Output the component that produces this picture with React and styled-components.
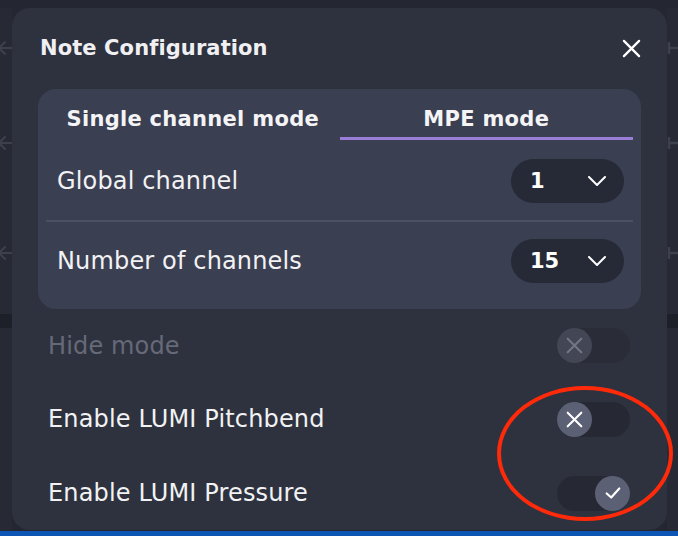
import { useState } from 'react';
import styled, { createGlobalStyle } from 'styled-components';

const GlobalStyle = createGlobalStyle`
  html, body {
    margin: 0;
    padding: 0;
    background: #242731;
    font-family: "DejaVu Sans", "Liberation Sans", sans-serif;
  }
`;

const Page = styled.div`
  position: relative;
  width: 678px;
  height: 536px;
  display: flex;
  flex-direction: column;
  overflow: hidden;
  background: #242731;
`;

const Stage = styled.div`
  flex: 1;
  display: flex;
  padding: 8px 0 1px;
  min-height: 0;
`;

const Side = styled.div`
  width: ${(p) => p.w}px;
  display: flex;
  flex-direction: column;
  align-items: ${(p) => (p.right ? 'flex-start' : 'flex-end')};
  overflow: hidden;
  background: #272a35;
  color: #3d414d;
`;

const SideItem = styled.div`
  height: 110px;
  display: flex;
  align-items: center;
  &:first-child {
    height: 80px;
  }
`;

const SideBand = styled.div`
  align-self: stretch;
  height: 14px;
  background: #1d2028;
  margin-top: 6px;
`;

const Taskbar = styled.div`
  height: 5px;
  background: #0d56b3;
`;

const Modal = styled.div`
  flex: 1;
  background: #2e323f;
  border-radius: 18px;
  padding: 0 26px;
  display: flex;
  flex-direction: column;
  color: #f2f2f4;
`;

const Header = styled.div`
  height: 81px;
  display: flex;
  align-items: flex-start;
  justify-content: space-between;
  padding-top: 28px;
  box-sizing: border-box;
`;

const Title = styled.h2`
  margin: 0;
  padding-left: 2px;
  font-size: 21px;
  font-weight: 700;
  line-height: 24px;
  letter-spacing: 0.1px;
  color: #f0f0f3;
`;

const CloseButton = styled.button`
  border: none;
  background: none;
  padding: 0;
  margin-top: 3px;
  width: 19px;
  height: 19px;
  color: #fff;
  cursor: pointer;
  display: flex;
`;

const Card = styled.div`
  background: #3b3f52;
  border-radius: 18px;
  padding: 0 8px 9px;
`;

const Tabs = styled.div`
  display: grid;
  grid-template-columns: 1fr 1fr;
`;

const Tab = styled.button`
  height: 51px;
  border: none;
  background: none;
  color: #f4f4f6;
  font-family: inherit;
  font-size: 21px;
  font-weight: 700;
  letter-spacing: 0.3px;
  padding: 13px 0 0;
  border-bottom: 3px solid ${(p) => (p.active ? '#9a7dd6' : 'transparent')};
  cursor: pointer;
`;

const Row = styled.div`
  height: 78px;
  display: flex;
  align-items: center;
  justify-content: space-between;
  padding: 0 9px 0 11px;
  border-bottom: ${(p) => (p.divider ? '2px solid #4c5065' : 'none')};
  margin-top: ${(p) => (p.divider ? 2 : 0)}px;
`;

const Label = styled.span`
  font-size: 24px;
  letter-spacing: 0.15px;
  color: ${(p) => (p.disabled ? '#666a78' : '#f2f2f4')};
`;

const Select = styled.div`
  width: 113px;
  height: 44px;
  box-sizing: border-box;
  border-radius: 22px;
  background: #262a36;
  display: flex;
  align-items: center;
  justify-content: space-between;
  padding: 0 18px 0 19px;
  font-size: 21px;
  font-weight: 700;
  color: #fff;
`;

const ToggleRow = styled.div`
  height: 74px;
  display: flex;
  align-items: center;
  justify-content: space-between;
  padding: 0 11px 0 10px;
`;

const Track = styled.div`
  width: 73px;
  height: 35px;
  border-radius: 18px;
  background: ${(p) => (p.disabled ? '#2a2d38' : '#262934')};
  display: flex;
  justify-content: ${(p) => (p.on ? 'flex-end' : 'flex-start')};
  cursor: ${(p) => (p.disabled ? 'default' : 'pointer')};
`;

const Knob = styled.div`
  width: 35px;
  height: 35px;
  border-radius: 50%;
  background: ${(p) => (p.disabled ? '#434654' : '#5c6074')};
  color: ${(p) => (p.disabled ? '#737684' : '#fff')};
  display: flex;
  align-items: center;
  justify-content: center;
`;

const Annotation = styled.div`
  position: absolute;
  left: 497px;
  top: 386px;
  width: 176px;
  height: 135px;
  box-sizing: border-box;
  border: 4px solid #ff2a0a;
  border-radius: 50%;
  pointer-events: none;
`;

const XIcon = ({ size = 19, stroke = 2.4 }) => (
  <svg width={size} height={size} viewBox="0 0 20 20" fill="none">
    <path d="M2 2 L18 18 M18 2 L2 18" stroke="currentColor" strokeWidth={stroke} strokeLinecap="round" />
  </svg>
);

const CheckIcon = () => (
  <svg width="18" height="18" viewBox="0 0 20 20" fill="none">
    <path d="M3 10.5 L8 15 L17 5" stroke="currentColor" strokeWidth="2.4" strokeLinecap="round" strokeLinejoin="round" />
  </svg>
);

const Chevron = () => (
  <svg width="18" height="10" viewBox="0 0 18 10" fill="none">
    <path d="M1 1 L9 9 L17 1" stroke="#fff" strokeWidth="2" strokeLinecap="round" strokeLinejoin="round" />
  </svg>
);

const BackArrow = () => (
  <svg width="16" height="16" viewBox="0 0 16 16" fill="none">
    <path d="M9 2 L3 8 L9 14 M3 8 H16" stroke="currentColor" strokeWidth="2" strokeLinecap="round" />
  </svg>
);

const PlusMark = () => (
  <svg width="16" height="16" viewBox="0 0 16 16" fill="none">
    <path d="M2 2 V14 M2 8 H14" stroke="currentColor" strokeWidth="2.5" />
  </svg>
);

const Toggle = ({ on, disabled, onClick }) => (
  <Track on={on} disabled={disabled} onClick={disabled ? undefined : onClick}>
    <Knob disabled={disabled}>{on ? <CheckIcon /> : <XIcon size={17} stroke={2.4} />}</Knob>
  </Track>
);

const App = () => {
  const [tab, setTab] = useState('mpe');
  const [pitchbend, setPitchbend] = useState(false);
  const [pressure, setPressure] = useState(true);

  return (
    <Page>
      <GlobalStyle />
      <Stage>
        <Side w={12}>
          <SideItem><BackArrow /></SideItem>
          <SideItem><BackArrow /></SideItem>
          <SideItem><BackArrow /></SideItem>
          <SideBand />
        </Side>
        <Modal>
          <Header>
            <Title>Note Configuration</Title>
            <CloseButton aria-label="Close">
              <XIcon />
            </CloseButton>
          </Header>
          <Card>
            <Tabs>
              <Tab active={tab === 'single'} onClick={() => setTab('single')}>
                Single channel mode
              </Tab>
              <Tab active={tab === 'mpe'} onClick={() => setTab('mpe')}>
                MPE mode
              </Tab>
            </Tabs>
            <Row divider>
              <Label>Global channel</Label>
              <Select>
                <span>1</span>
                <Chevron />
              </Select>
            </Row>
            <Row>
              <Label>Number of channels</Label>
              <Select>
                <span>15</span>
                <Chevron />
              </Select>
            </Row>
          </Card>
          <ToggleRow>
            <Label disabled>Hide mode</Label>
            <Toggle disabled />
          </ToggleRow>
          <ToggleRow>
            <Label>Enable LUMI Pitchbend</Label>
            <Toggle on={pitchbend} onClick={() => setPitchbend(!pitchbend)} />
          </ToggleRow>
          <ToggleRow>
            <Label>Enable LUMI Pressure</Label>
            <Toggle on={pressure} onClick={() => setPressure(!pressure)} />
          </ToggleRow>
        </Modal>
        <Side w={11} right>
          <SideItem><PlusMark /></SideItem>
          <SideItem><PlusMark /></SideItem>
          <SideItem><PlusMark /></SideItem>
          <SideBand />
        </Side>
      </Stage>
      <Taskbar />
      <Annotation />
    </Page>
  );
};

export default App;
